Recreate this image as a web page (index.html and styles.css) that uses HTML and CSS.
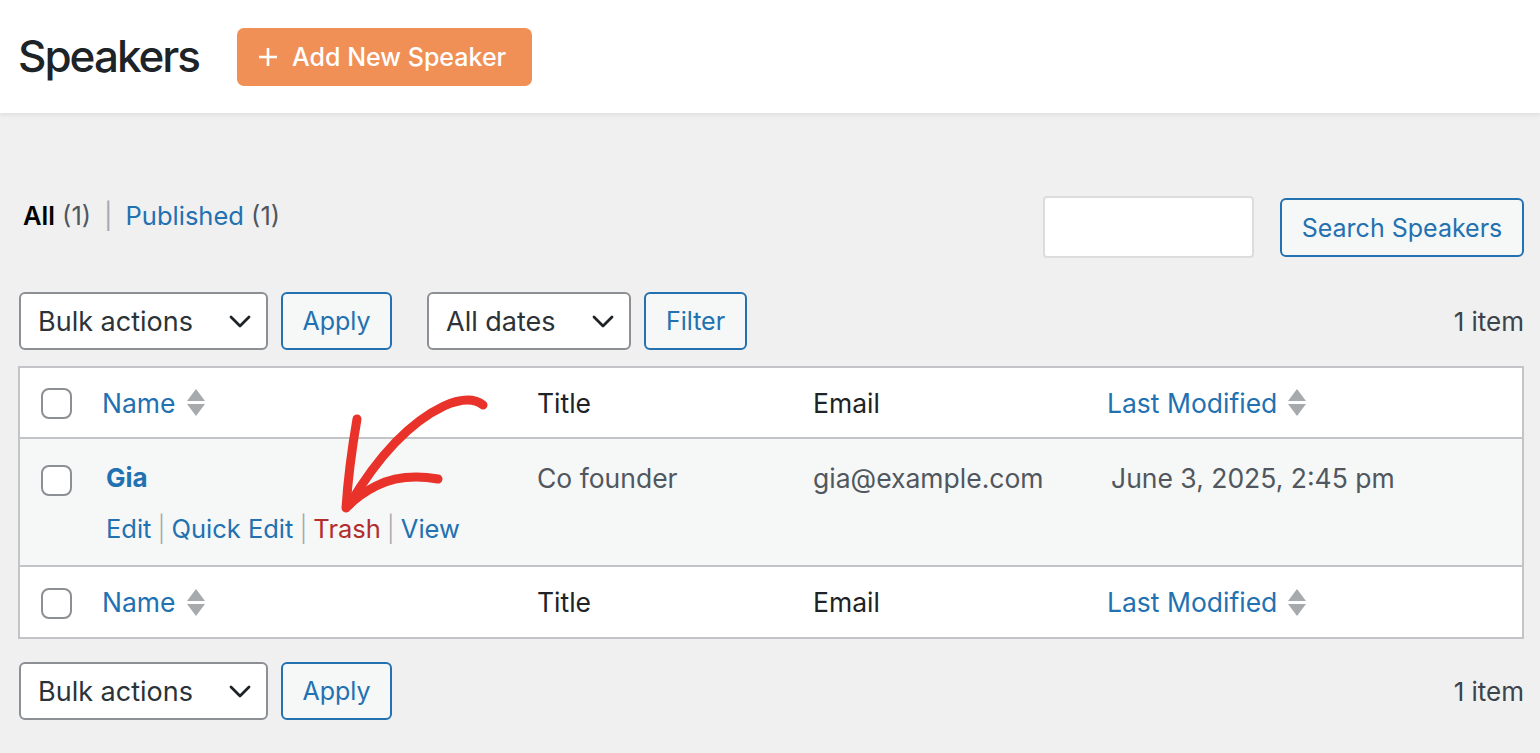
FILE: index.html
```html
<!DOCTYPE html>
<html lang="en">
<head>
<meta charset="utf-8">
<title>Speakers</title>
<link rel="stylesheet" href="styles.css">
</head>
<body>
<div class="page">
  <header class="topbar">
    <h1 class="page-title">Speakers</h1>
    <a class="add-btn" href="#">
      <svg class="plus" width="20" height="20" viewBox="0 0 20 20"><path d="M10 1v18M1 10h18" stroke="#fff" stroke-width="2.6" fill="none"/></svg>
      <span>Add New Speaker</span>
    </a>
  </header>

  <main class="content">
    <div class="top-row">
      <ul class="subsubsub">
        <li><a class="current" href="#">All</a> <span class="count">(1)</span></li>
        <li class="sep">|</li>
        <li><a href="#">Published</a> <span class="count">(1)</span></li>
      </ul>
      <div class="search-box">
        <input class="search-input" type="search" aria-label="Search">
        <button class="btn btn-search">Search Speakers</button>
      </div>
    </div>

    <div class="tablenav tablenav-top">
      <div class="actions">
        <div class="select select-bulk"><span>Bulk actions</span><svg class="chev" width="22" height="14" viewBox="0 0 22 14"><path d="M2 2l9 9 9-9" stroke="#1d2327" stroke-width="2.8" fill="none" stroke-linecap="round" stroke-linejoin="round"/></svg></div>
        <button class="btn btn-apply">Apply</button>
      </div>
      <div class="actions">
        <div class="select select-dates"><span>All dates</span><svg class="chev" width="22" height="14" viewBox="0 0 22 14"><path d="M2 2l9 9 9-9" stroke="#1d2327" stroke-width="2.8" fill="none" stroke-linecap="round" stroke-linejoin="round"/></svg></div>
        <button class="btn btn-filter">Filter</button>
      </div>
      <div class="items">1 item</div>
    </div>

    <table class="list-table">
      <colgroup>
        <col class="c-cb"><col class="c-name"><col class="c-title"><col class="c-email"><col class="c-date">
      </colgroup>
      <thead>
        <tr>
          <td class="cb"><span class="checkbox"></span></td>
          <th><div class="sortable"><a href="#">Name</a><span class="sort"><i class="up"></i><i class="down"></i></span></div></th>
          <th>Title</th>
          <th>Email</th>
          <th><div class="sortable"><a href="#">Last Modified</a><span class="sort"><i class="up"></i><i class="down"></i></span></div></th>
        </tr>
      </thead>
      <tbody>
        <tr class="alt">
          <td class="cb cb-body"><span class="checkbox"></span></td>
          <td class="name-cell">
            <a class="row-title" href="#">Gia</a>
            <div class="row-actions">
              <a href="#">Edit</a><span class="bar">|</span><a href="#">Quick Edit</a><span class="bar">|</span><a class="trash" href="#">Trash</a><span class="bar">|</span><a href="#">View</a>
            </div>
          </td>
          <td class="val">Co founder</td>
          <td class="val">gia@example.com</td>
          <td class="val date">June 3, 2025, 2:45 pm</td>
        </tr>
      </tbody>
      <tfoot>
        <tr>
          <td class="cb"><span class="checkbox"></span></td>
          <th><div class="sortable"><a href="#">Name</a><span class="sort"><i class="up"></i><i class="down"></i></span></div></th>
          <th>Title</th>
          <th>Email</th>
          <th><div class="sortable"><a href="#">Last Modified</a><span class="sort"><i class="up"></i><i class="down"></i></span></div></th>
        </tr>
      </tfoot>
    </table>

    <div class="tablenav tablenav-bottom">
      <div class="actions">
        <div class="select select-bulk"><span>Bulk actions</span><svg class="chev" width="22" height="14" viewBox="0 0 22 14"><path d="M2 2l9 9 9-9" stroke="#1d2327" stroke-width="2.8" fill="none" stroke-linecap="round" stroke-linejoin="round"/></svg></div>
        <button class="btn btn-apply">Apply</button>
      </div>
      <div class="items">1 item</div>
    </div>
  </main>

  <svg class="arrow" width="1540" height="753" viewBox="0 0 1540 753" aria-hidden="true">
    <g stroke="#e8322a" stroke-width="9" fill="none" stroke-linecap="round" stroke-linejoin="round">
      <path d="M483 405 C474 398 460 399 444 406 C410 422 377 458 349 505"/>
      <path d="M357 419 C352 448 348 478 346 508"/>
      <path d="M438 479 C414 475 392 478 376 486 C364 492 355 499 348 506"/>
    </g>
  </svg>
</div>
</body>
</html>
```

FILE: styles.css
```css
* { box-sizing: border-box; }

html, body {
  margin: 0;
  padding: 0;
}

body {
  background: #f0f0f1;
  font-family: Inter, "Noto Sans", "Liberation Sans", sans-serif;
  color: #3c434a;
  width: 1540px;
  height: 753px;
  overflow: hidden;
}

.page {
  position: relative;
  height: 753px;
}

a { text-decoration: none; color: #2271b1; }

.topbar {
  height: 113px;
  background: #fff;
  display: flex;
  align-items: center;
  padding-left: 18px;
  gap: 38px;
  box-shadow: 0 2px 5px rgba(0,0,0,0.08);
  position: relative;
}

.page-title {
  margin: 0;
  font-size: 44px;
  font-weight: 500;
  color: #1d2327;
  letter-spacing: -2px;
  line-height: 1;
  padding-bottom: 2px;
}

.add-btn {
  display: flex;
  align-items: center;
  gap: 14px;
  height: 58px;
  width: 295px;
  padding-left: 21px;
  background: #f09057;
  border-radius: 7px;
  color: #fff;
  font-size: 25px;
  font-weight: 500;
  margin-top: 1px;
}

.content {
  padding: 83px 16px 0 18px;
}

.top-row {
  display: flex;
  justify-content: space-between;
  align-items: flex-start;
  height: 62px;
}

.subsubsub {
  list-style: none;
  margin: 0;
  padding: 5px 0 0 5px;
  display: flex;
  gap: 13px;
  font-size: 25.5px;
  line-height: 30px;
}

.subsubsub .current { color: #000; font-weight: 600; }
.subsubsub .count { color: #50575e; }
.subsubsub .sep { color: #a7aaad; }

.search-box {
  display: flex;
  gap: 26px;
  align-items: flex-start;
}

.search-input {
  width: 211px;
  height: 62px;
  border: 2px solid #dcdcde;
  border-radius: 4px;
  background: #fff;
  margin: 0;
}

.btn {
  font-family: inherit;
  background: #f6f7f7;
  border: 2px solid #2271b1;
  border-radius: 6px;
  color: #2271b1;
  font-size: 25px;
  padding: 0;
  margin: 0;
}

.btn-search {
  width: 244px;
  height: 59px;
  margin-top: 2px;
}

.tablenav {
  display: flex;
  align-items: center;
  height: 58px;
  margin-top: 34px;
}

.tablenav-bottom { margin-top: 23px; }

.actions {
  display: flex;
  gap: 13px;
  margin-right: 35px;
  margin-left: 1px;
}

.actions + .actions { margin-left: 0; }

.select {
  height: 58px;
  border: 2px solid #8c8f94;
  border-radius: 6px;
  background: #fff;
  display: flex;
  align-items: center;
  justify-content: space-between;
  padding: 0 15px 0 17px;
  font-size: 27px;
  color: #2c3338;
}

.select-bulk { width: 249px; }
.select-dates { width: 204px; }

.chev { margin-top: 2px; }

.btn-apply { width: 111px; height: 58px; }
.btn-filter { width: 103px; height: 58px; }

.items {
  margin-left: auto;
  font-size: 26px;
  color: #3c434a;
}

.list-table {
  width: 1506px;
  margin-top: 16px;
  border: 2px solid #c3c4c7;
  border-collapse: collapse;
  table-layout: fixed;
  background: #fff;
}

.c-cb { width: 68px; }
.c-name { width: 435px; }
.c-title { width: 276px; }
.c-email { width: 294px; }

.list-table th,
.list-table td {
  text-align: left;
  font-weight: 400;
  padding: 0 0 0 15px;
  vertical-align: middle;
}

thead tr { height: 71px; border-bottom: 2px solid #c3c4c7; }
tfoot tr { height: 72px; border-top: 2px solid #c3c4c7; }

.list-table th {
  font-size: 26.5px;
  color: #1d2327;
}

.list-table th a { color: #2271b1; }

.sortable {
  display: flex;
  align-items: center;
  white-space: nowrap;
}

.sort {
  display: flex;
  flex-direction: column;
  gap: 3px;
  margin-left: 11px;
}

.sort i {
  display: block;
  width: 0;
  height: 0;
  border-left: 9px solid transparent;
  border-right: 9px solid transparent;
}

.sort .up { border-bottom: 12px solid #a7aaad; }
.sort .down { border-top: 12px solid #a7aaad; }

.list-table td.cb { padding-left: 21px; }

.checkbox {
  display: block;
  width: 31px;
  height: 31px;
  border: 2px solid #8c8f94;
  border-radius: 8px;
  background: #fff;
  margin-top: 2px;
}

tbody tr.alt { background: #f6f7f7; height: 128px; }

tbody td { vertical-align: top !important; padding-top: 23px !important; }
tbody td.cb-body { padding-top: 24px !important; }

.name-cell { padding-left: 19px !important; }

.row-title {
  font-size: 26px;
  font-weight: 700;
  line-height: 32px;
  display: block;
}

.row-actions {
  margin-top: 20px;
  font-size: 25.5px;
  line-height: 30px;
}

.row-actions .bar { color: #a7aaad; margin: 0 6px; font-weight: 300; }
.row-actions .trash { color: #b32d2e; }

.val {
  font-size: 26.5px;
  line-height: 32px;
  color: #50575e;
}

.val.date { padding-left: 19px !important; }

.arrow {
  position: absolute;
  left: 0;
  top: 0;
  pointer-events: none;
}
```
